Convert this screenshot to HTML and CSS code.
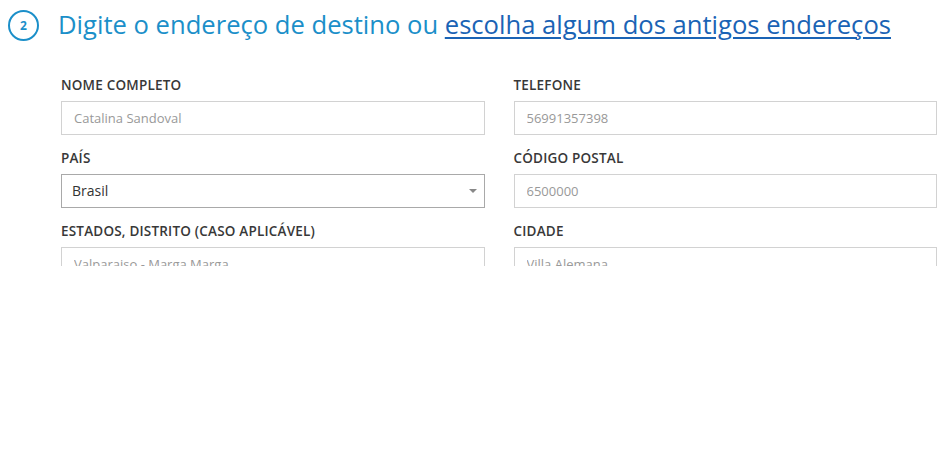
FILE: index.html
```html
<!DOCTYPE html>
<html lang="pt-BR">
<head>
<meta charset="utf-8">
<title>Endereço de destino</title>
<link rel="stylesheet" href="styles.css">
</head>
<body>
<div class="panel">
  <h2 class="step-title">
    <span class="step-num">2</span>
    <span class="step-text">Digite o endereço de destino ou <a href="#" class="step-link">escolha algum dos antigos endereços</a></span>
  </h2>
  <form class="address-form">
    <div class="field">
      <label class="field-label">NOME COMPLETO</label>
      <input class="field-input" type="text" value="Catalina Sandoval">
    </div>
    <div class="field">
      <label class="field-label">TELEFONE</label>
      <input class="field-input" type="text" value="56991357398">
    </div>
    <div class="field">
      <label class="field-label">PAÍS</label>
      <div class="select-wrap">
        <select class="field-select">
          <option>Brasil</option>
        </select>
      </div>
    </div>
    <div class="field">
      <label class="field-label">CÓDIGO POSTAL</label>
      <input class="field-input" type="text" value="6500000">
    </div>
    <div class="field">
      <label class="field-label">ESTADOS, DISTRITO (CASO APLICÁVEL)</label>
      <input class="field-input" type="text" value="Valparaiso - Marga Marga">
    </div>
    <div class="field">
      <label class="field-label">CIDADE</label>
      <input class="field-input" type="text" value="Villa Alemana">
    </div>
  </form>
</div>
</body>
</html>
```
FILE: styles.css
```css
* { box-sizing: border-box; }
html, body { margin: 0; padding: 0; background: #fff; }
body { font-family: "Open Sans", "Noto Sans", sans-serif; color: #333; }

.panel {
  height: 266px;
  overflow: hidden;
}

.step-title {
  margin: 0;
  padding: 7px 8px 0 8px;
  display: flex;
  align-items: flex-start;
  gap: 19px;
  font-weight: 400;
  font-size: 25.6px;
  line-height: 36px;
  color: #1b8fc9;
}
.step-num {
  flex: none;
  margin-top: 3px;
  width: 31px;
  height: 31px;
  border: 2px solid #1b8fc9;
  border-radius: 50%;
  display: flex;
  align-items: center;
  justify-content: center;
  font-size: 12px;
  font-weight: 700;
  line-height: 1;
}
.step-text { white-space: nowrap; }
.step-link {
  color: #1a63b5;
  text-decoration: underline;
  text-decoration-thickness: 1.5px;
  text-underline-offset: 3px;
}

.address-form {
  padding: 33px 8px 0 61px;
  display: grid;
  grid-template-columns: 1fr 1fr;
  column-gap: 29px;
  row-gap: 14px;
}
.field { display: flex; flex-direction: column; }
.field-label {
  font-size: 13.5px;
  letter-spacing: 0.2px;
  line-height: 18px;
  font-weight: 600;
  color: #383838;
  margin-bottom: 7px;
}
.field-input, .field-select {
  width: 100%;
  height: 34px;
  margin: 0;
  font-family: inherit;
  border-radius: 0;
  outline: none;
  background: #fff;
}
.field-input {
  border: 1px solid #d2d2d2;
  padding: 0 12px 1px;
  font-size: 13px;
  color: #999;
}
.select-wrap { position: relative; }
.select-wrap::after {
  content: "";
  position: absolute;
  right: 8px;
  top: 15px;
  border-left: 4px solid transparent;
  border-right: 4px solid transparent;
  border-top: 4px solid #888;
}
.field-select {
  appearance: none;
  -webkit-appearance: none;
  border: 1px solid #a9a9a9;
  padding: 0 10px 1px;
  font-size: 14px;
  color: #333;
}
```
